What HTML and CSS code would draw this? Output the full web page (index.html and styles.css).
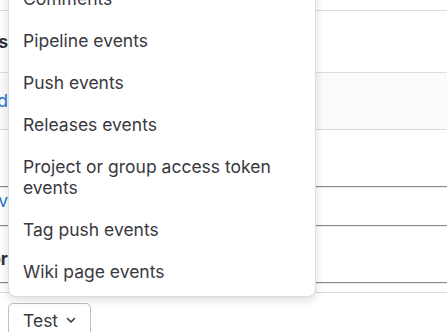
FILE: index.html
```html
<!DOCTYPE html>
<html lang="en">
<head>
<meta charset="UTF-8">
<meta name="viewport" content="width=device-width, initial-scale=1.0">
<title>Webhook test</title>
<link rel="stylesheet" href="styles.css">
</head>
<body>

<!-- Rows of the webhook list behind the menu -->
<div class="hook-list">
  <div class="hook-row row-top"></div>
  <div class="hook-row row-b">
    <div class="hook-label"><strong>Triggers</strong></div>
  </div>
  <div class="hook-row row-c shaded">
    <div class="hook-label"><a href="#">Edited</a></div>
  </div>
  <div class="hook-row row-d dark"></div>
  <div class="hook-row row-e dark">
    <div class="hook-label"><a href="#">Dev</a></div>
  </div>
  <div class="hook-row row-f dark">
    <div class="hook-label"><strong>Author</strong></div>
  </div>
  <div class="hook-row row-g"></div>
</div>

<div class="actions">
  <button class="btn-test" type="button">
    Test
    <svg class="chevron" width="16" height="16" viewBox="0 0 16 16" aria-hidden="true">
      <path d="M4.5 6.5 8 10l3.5-3.5" fill="none" stroke="currentColor" stroke-width="1.6" stroke-linecap="round" stroke-linejoin="round"/>
    </svg>
  </button>
</div>

<!-- Open dropdown of the Test button -->
<ul class="dropdown">
  <li>Comments</li>
  <li>Pipeline events</li>
  <li>Push events</li>
  <li>Releases events</li>
  <li>Project or group access token events</li>
  <li>Tag push events</li>
  <li>Wiki page events</li>
</ul>

</body>
</html>
```

FILE: styles.css
```css
body {
  font-family: Inter, "Noto Sans", sans-serif;
  font-size: 17.5px;
  margin: 0;
  padding: 0;
  background-color: #fff;
  color: #3a383f;
  position: relative;
  height: 332px;
  overflow: hidden;
}

.hook-row {
  display: flex;
  align-items: center;
  border-bottom: 1px solid #dcdcde;
}

.hook-row.dark {
  border-bottom-color: #89888d;
  box-shadow: 0 1px 0 #ececef;
}

.shaded {
  background-color: #fbfafd;
}

.row-top { height: 10px; }
.row-b { height: 61px; }
.row-c { height: 56px; }
.row-d { height: 56px; }
.row-e { height: 35px; align-items: flex-start; padding-top: 3px; }
.row-f { height: 47px; padding-top: 9px; }
.row-g { height: 9px; }

.hook-label {
  width: 8px;
  overflow: hidden;
  display: flex;
  justify-content: flex-end;
  white-space: nowrap;
  line-height: 22px;
}

.hook-label strong {
  font-weight: 700;
  color: #333238;
}

.hook-label a {
  color: #1f75cb;
  text-decoration: none;
}

.actions {
  padding: 10px 8px 0;
}

.btn-test {
  display: flex;
  align-items: center;
  gap: 5px;
  height: 34px;
  padding: 0 11px 0 14px;
  font-family: inherit;
  font-size: 17.5px;
  color: #3a383f;
  background-color: #fff;
  border: 1px solid #bfbfc3;
  border-radius: 5px;
}

.dropdown {
  position: absolute;
  top: -28px;
  left: 8px;
  width: 306px;
  margin: 0;
  padding: 4px 0;
  list-style-type: none;
  background-color: #fff;
  border: 1px solid #dcdcde;
  border-radius: 8px;
  box-shadow: 0 3px 10px rgba(5, 5, 6, 0.14);
}

.dropdown li {
  padding: 10.5px 28px 10.5px 14px;
  line-height: 21px;
}
```
